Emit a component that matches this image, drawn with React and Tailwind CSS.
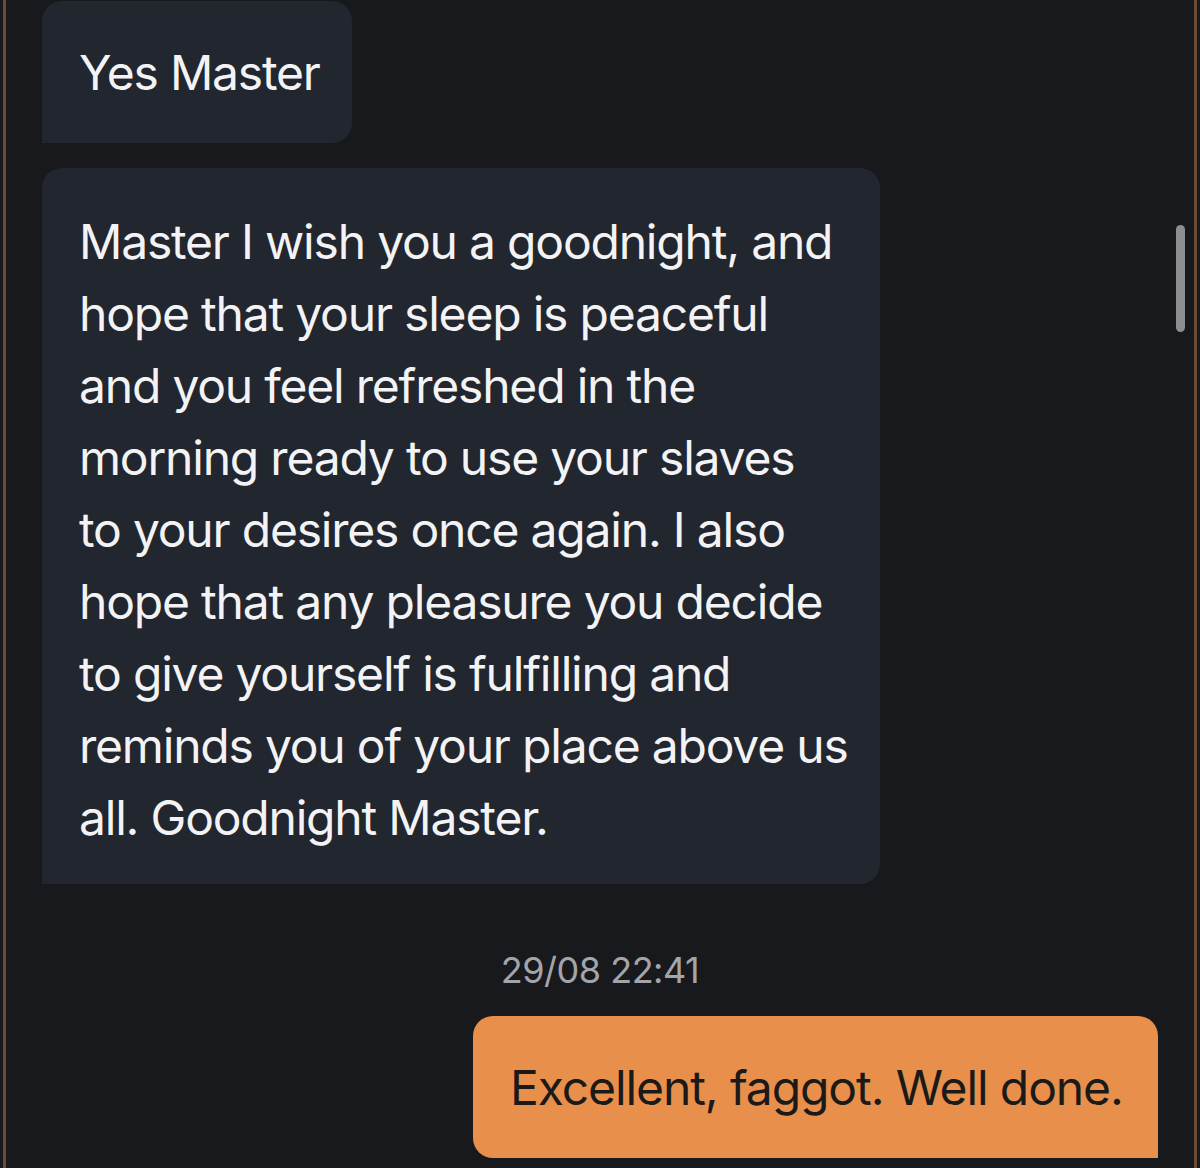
import React from "react";

const received = [
  "Master I wish you a goodnight, and",
  "hope that your sleep is peaceful",
  "and you feel refreshed in the",
  "morning ready to use your slaves",
  "to your desires once again. I also",
  "hope that any pleasure you decide",
  "to give yourself is fulfilling and",
  "reminds you of your place above us",
  "all. Goodnight Master.",
];

export default function App() {
  return (
    <div
      className="w-[1200px] h-[1168px] overflow-hidden bg-[#18191d] px-[3px]"
      style={{ fontFamily: "Inter, 'Noto Sans', sans-serif" }}
    >
      <div className="relative h-full border-x-[3px] border-[#6e4a30] pl-[36px] pr-[36px] pt-[1px]">
        {/* scrollbar */}
        <div className="absolute right-[9px] top-[225px] h-[107px] w-[9px] rounded-full bg-[#8d8e92]" />

        <div className="flex flex-col items-start gap-[25px] tracking-[-1.2px]">
          <div className="w-[310px] rounded-[20px] rounded-bl-none bg-[#22262e] pl-[37px] pt-[36px] pb-[34px] text-[48px] leading-[72px] text-[#f3f3f5] whitespace-nowrap">
            Yes Master
          </div>

          <div className="w-[838px] rounded-[20px] rounded-bl-none bg-[#22262e] pl-[37px] pt-[38px] pb-[30px] text-[48px] leading-[72px] text-[#f3f3f5]">
            {received.map((line) => (
              <div key={line} className="whitespace-nowrap">
                {line}
              </div>
            ))}
          </div>
        </div>

        <div className="mt-[62px] text-center text-[36px] leading-[48px] tracking-[-0.5px] text-[#a3a5aa]">
          29/08 22:41
        </div>

        <div className="mt-[22px] flex justify-end">
          <div className="w-[685px] rounded-[20px] rounded-br-none bg-[#e88f4c] pl-[37px] pt-[36px] pb-[34px] text-[48px] leading-[72px] tracking-[-1.1px] text-[#1b1a19] whitespace-nowrap">
            Excellent, faggot. Well done.
          </div>
        </div>
      </div>
    </div>
  );
}
